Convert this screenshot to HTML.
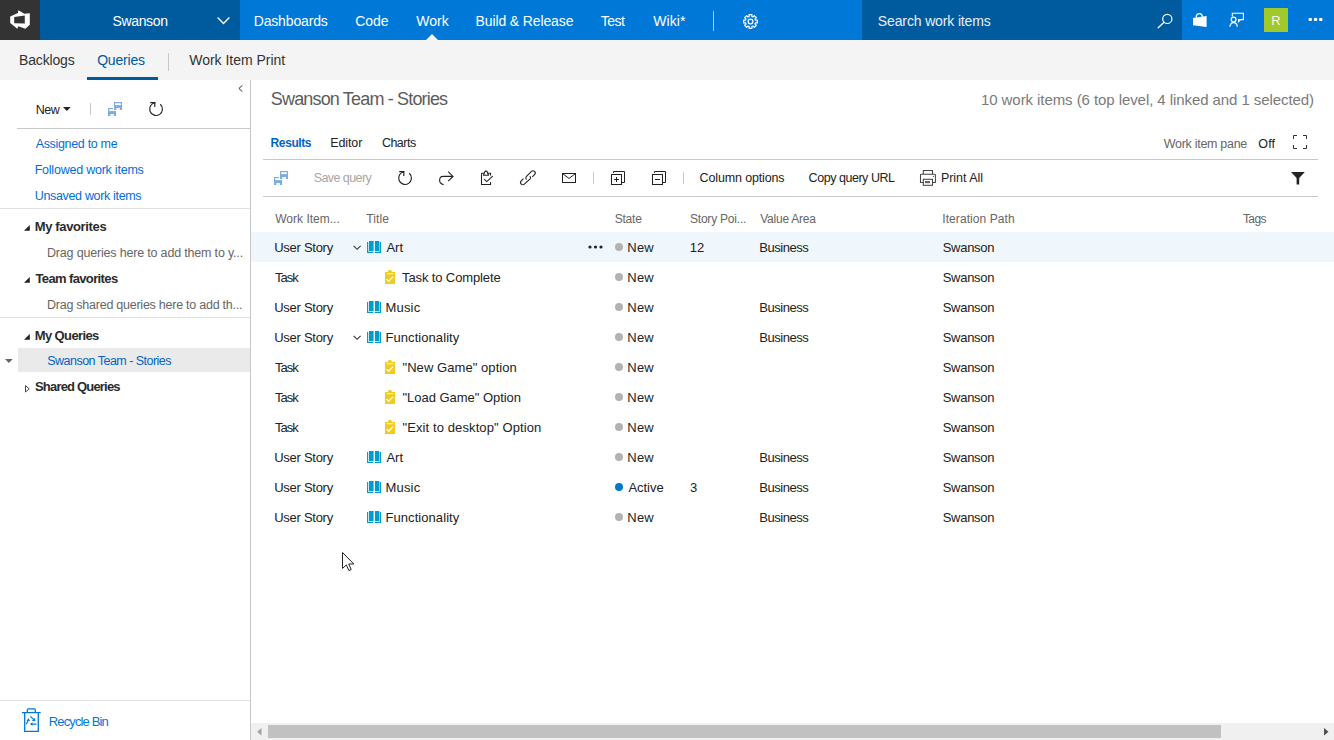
<!DOCTYPE html>
<html><head><meta charset="utf-8"><style>
*{margin:0;padding:0;box-sizing:border-box}
html,body{width:1334px;height:740px;overflow:hidden;background:#fff;font-family:"Liberation Sans",sans-serif;color:#333}
.a{position:absolute;white-space:nowrap}
svg{position:absolute;overflow:visible}
.tn{position:absolute;top:0;line-height:42px;font-size:14px;color:#fff;letter-spacing:-0.2px;white-space:nowrap}
.sn{position:absolute;top:40px;line-height:40px;font-size:14px;color:#333;letter-spacing:-0.1px;white-space:nowrap}
.lk{position:absolute;font-size:12.5px;color:#106ebe;line-height:20px;letter-spacing:-0.15px;white-space:nowrap}
.hd{position:absolute;font-size:13px;font-weight:bold;color:#222;line-height:20px;letter-spacing:-0.3px;white-space:nowrap}
.dg{position:absolute;font-size:12.5px;color:#666;line-height:20px;letter-spacing:-0.15px;white-space:nowrap}
.hr{position:absolute;height:1px;background:#e1e1e1}
.gh{position:absolute;top:209px;font-size:12.5px;color:#666;line-height:20px;letter-spacing:-0.2px;white-space:nowrap}
.c{position:absolute;font-size:13px;color:#222;line-height:30px;letter-spacing:-0.3px;white-space:nowrap}
.dot{position:absolute;width:8px;height:8px;border-radius:50%;background:#b2b2b2}
.tb{position:absolute;top:168px;line-height:20px;font-size:13px;color:#333;letter-spacing:-0.25px;white-space:nowrap}
</style></head><body>
<svg width="0" height="0" style="position:absolute"><defs>
<g id="book"><rect x="0" y="1" width="1.2" height="11" fill="#009ccc"/><rect x="0" y="10.8" width="6.3" height="1.2" fill="#009ccc"/><rect x="12.8" y="1" width="1.2" height="11" fill="#009ccc"/><rect x="7.7" y="10.8" width="6.3" height="1.2" fill="#009ccc"/><rect x="2" y="0" width="4.6" height="10.1" fill="#009ccc"/><rect x="7.9" y="0" width="4.4" height="10.1" fill="#009ccc"/></g>
<g id="task"><rect x="0" y="2" width="10" height="12" fill="#f2cb1d"/><path d="M3 2 L3.3 0.6 Q3.5 0 4.2 0 L5.6 0 Q6.3 0 6.5 0.6 L6.8 2Z" fill="#f2cb1d"/><rect x="1.5" y="3.3" width="7" height="0.9" fill="#fff"/><path d="M1.6 9.1 L3.6 11.2 L8.1 6.6" fill="none" stroke="#fff" stroke-width="1.3"/></g>
<g id="disk"><rect x="0" y="0" width="8" height="8" fill="#7eabe0"/><rect x="1.2" y="1.2" width="5.6" height="1.9" fill="#fff"/><rect x="2.3" y="6" width="3.6" height="2" fill="#fff"/><rect x="3.6" y="6.6" width="1" height="0.9" fill="#a9c6ea"/></g>
<g id="saveall"><use href="#disk" x="0" y="6"/><rect x="5" y="5" width="4" height="4" fill="#fff"/><use href="#disk" x="6" y="0"/></g>
<g id="refresh"><path d="M6.3 0.7 A6.4 6.4 0 1 0 11.3 2.3" fill="none" stroke="#222" stroke-width="1.15"/><path d="M1.2 0.6 L5.8 0.6 L5.8 5" fill="none" stroke="#222" stroke-width="1.15"/></g>
</defs></svg>
<div class="a" style="left:0px;top:0px;width:1334px;height:40px;background:#0078d7;"></div>
<div class="a" style="left:0px;top:0px;width:40px;height:40px;background:#333;"></div>
<div class="a" style="left:40px;top:0px;width:200px;height:40px;background:#005a9e;"></div>
<div class="a" style="left:862px;top:0px;width:320px;height:40px;background:#005a9e;"></div>
<div class="a" style="left:112.47px;top:11px;font-size:14px;line-height:20px;letter-spacing:-0.345px;color:#fff;">Swanson</div>
<div class="a" style="left:253.68px;top:11px;font-size:14px;line-height:20px;letter-spacing:-0.150px;color:#fff;">Dashboards</div>
<div class="a" style="left:355.30px;top:11px;font-size:14px;line-height:20px;letter-spacing:-0.077px;color:#fff;">Code</div>
<div class="a" style="left:416.23px;top:11px;font-size:14px;line-height:20px;letter-spacing:0.020px;color:#fff;">Work</div>
<div class="a" style="left:475.58px;top:11px;font-size:14px;line-height:20px;letter-spacing:-0.126px;color:#fff;">Build &amp; Release</div>
<div class="a" style="left:600.82px;top:11px;font-size:14px;line-height:20px;letter-spacing:-0.557px;color:#fff;">Test</div>
<div class="a" style="left:653.23px;top:11px;font-size:14px;line-height:20px;letter-spacing:0.065px;color:#fff;">Wiki*</div>
<div class="a" style="left:877.87px;top:11px;font-size:14px;line-height:20px;letter-spacing:-0.139px;color:#e8eef5;">Search work items</div>
<svg style="left:10px;top:10px" width="21" height="19" viewBox="0 0 21 19"><path d="M8.3 0.2 L14.5 3.7 L19.8 3.3 L19.8 14.8 L15.4 18.8 L8.3 16.3 L7.3 18.8 L0.2 12.9 L0.2 6.4 L7.9 3 Z M4.2 7 L14.8 5.6 L14.8 13.6 L4.2 13.2 Z" fill="#fff" fill-rule="evenodd"/></svg>
<svg style="left:217px;top:17px" width="13" height="8" viewBox="0 0 13 8"><path d="M0.6 0.6 L6.5 6.5 L12.4 0.6" fill="none" stroke="#fff" stroke-width="1.4"/></svg>
<div class="a" style="left:713px;top:11px;width:1px;height:20px;background:#a8cdef;"></div>
<svg style="left:426px;top:34px" width="12" height="6" viewBox="0 0 12 6"><path d="M0 6 L6 0 L12 6Z" fill="#f4f4f4"/></svg>
<svg style="left:743px;top:14px" width="15" height="15" viewBox="-7.5 -7.5 15 15"><path d="M5.02 -1.35 L6.85 -1.46 L6.85 1.46 L5.02 1.35 L4.50 2.60 L5.87 3.81 L3.81 5.87 L2.60 4.50 L1.35 5.02 L1.46 6.85 L-1.46 6.85 L-1.35 5.02 L-2.60 4.50 L-3.81 5.87 L-5.87 3.81 L-4.50 2.60 L-5.02 1.35 L-6.85 1.46 L-6.85 -1.46 L-5.02 -1.35 L-4.50 -2.60 L-5.87 -3.81 L-3.81 -5.87 L-2.60 -4.50 L-1.35 -5.02 L-1.46 -6.85 L1.46 -6.85 L1.35 -5.02 L2.60 -4.50 L3.81 -5.87 L5.87 -3.81 L4.50 -2.60Z" fill="none" stroke="#fff" stroke-width="1.2" stroke-linejoin="round"/><circle cx="0" cy="0" r="2.4" fill="none" stroke="#fff" stroke-width="1.2"/></svg>
<svg style="left:1157px;top:13px" width="17" height="16" viewBox="0 0 17 16"><circle cx="10.3" cy="5.9" r="4.6" fill="none" stroke="#fff" stroke-width="1.2"/><path d="M7 9.2 L1.2 14.8" stroke="#fff" stroke-width="1.3" stroke-linecap="round"/></svg>
<svg style="left:1193px;top:13px" width="14" height="14" viewBox="0 0 14 14"><path d="M0 5 L13.6 3 L13.6 14 L0 12.2 Z" fill="#fff"/><path d="M3.2 4.8 Q3.2 0.6 6.3 0.6 Q9.3 0.6 9.3 4" fill="none" stroke="#fff" stroke-width="1.3"/></svg>
<svg style="left:1229px;top:12px" width="16" height="16" viewBox="0 0 16 16"><path d="M3.3 4.5 L3.3 1.3 L14.4 1.3 L14.4 7.6 L9.6 7.6" fill="none" stroke="#fff" stroke-width="1.1"/><path d="M9 7.1 L12.6 7.1 L8.9 11.2Z" fill="#fff"/><circle cx="4.6" cy="7.6" r="2.4" fill="none" stroke="#fff" stroke-width="1.2"/><path d="M0.9 14.8 Q1.3 10.6 4.6 10.6 Q7.9 10.6 8.3 14.8" fill="none" stroke="#fff" stroke-width="1.2"/></svg>
<div class="a" style="left:1264px;top:8px;width:24px;height:24px;background:#a1c92b;color:#f4f8e6;font-size:13px;line-height:25px;text-align:center">R</div>
<svg style="left:1308px;top:17px" width="16" height="5" viewBox="0 0 16 5"><rect x="0.6" y="0.9" width="3.3" height="3.1" rx="0.8" fill="#fff"/><rect x="5.9" y="0.9" width="3.3" height="3.1" rx="0.8" fill="#fff"/><rect x="11.1" y="0.9" width="3.3" height="3.1" rx="0.8" fill="#fff"/></svg>
<div class="a" style="left:0px;top:40px;width:1334px;height:40px;background:#f4f4f4;"></div>
<div class="a" style="left:19.08px;top:50px;font-size:14px;line-height:20px;letter-spacing:-0.176px;color:#333;">Backlogs</div>
<div class="a" style="left:97.17px;top:50px;font-size:14px;line-height:20px;letter-spacing:-0.180px;color:#005a9e;">Queries</div>
<div class="a" style="left:87px;top:77px;width:71px;height:3px;background:#005a9e;"></div>
<div class="a" style="left:168px;top:53px;width:1px;height:18px;background:#c8c8c8;"></div>
<div class="a" style="left:189.23px;top:50px;font-size:14px;line-height:20px;letter-spacing:-0.017px;color:#333;">Work Item Print</div>
<div class="a" style="left:250px;top:80px;width:1px;height:660px;background:#c8c8c8;"></div>
<svg style="left:238px;top:85px" width="5" height="7" viewBox="0 0 5 7"><path d="M4.3 0.4 L0.9 3.5 L4.3 6.6" fill="none" stroke="#333" stroke-width="1"/></svg>
<div class="a" style="left:35.80px;top:100px;font-size:12.5px;line-height:20px;letter-spacing:-0.481px;color:#222;">New</div>
<svg style="left:63px;top:107px" width="8" height="4" viewBox="0 0 8 4"><path d="M0 0 L7.7 0 L3.85 4Z" fill="#222"/></svg>
<div class="a" style="left:90px;top:103px;width:1px;height:12px;background:#c8c8c8;"></div>
<svg style="left:108px;top:102px" width="14" height="14" viewBox="0 0 14 14"><use href="#saveall"/></svg>
<svg style="left:149px;top:102px" width="14" height="14" viewBox="0 0 14 14"><use href="#refresh"/></svg>
<div class="a" style="left:17px;top:128px;width:233px;height:1px;background:#c8c8c8;"></div>
<div class="a" style="left:35.70px;top:134px;font-size:12.5px;line-height:20px;letter-spacing:-0.328px;color:#0070d4;">Assigned to me</div>
<div class="a" style="left:34.70px;top:160px;font-size:12.5px;line-height:20px;letter-spacing:-0.228px;color:#0070d4;">Followed work items</div>
<div class="a" style="left:34.76px;top:186px;font-size:12.5px;line-height:20px;letter-spacing:-0.335px;color:#0070d4;">Unsaved work items</div>
<div class="a" style="left:0px;top:208px;width:250px;height:1px;background:#e1e1e1;"></div>
<svg style="left:24px;top:225px" width="6" height="6" viewBox="0 0 6 6"><path d="M5.8 0 L5.8 5.7 L0 5.7Z" fill="#222"/></svg>
<div class="a" style="left:34.76px;top:217px;font-size:13px;line-height:20px;letter-spacing:-0.363px;color:#2b2b2b;font-weight:bold;">My favorites</div>
<div class="a" style="left:47.00px;top:243px;font-size:12.5px;line-height:20px;letter-spacing:-0.181px;color:#666;">Drag queries here to add them to y...</div>
<svg style="left:24px;top:277px" width="6" height="6" viewBox="0 0 6 6"><path d="M5.8 0 L5.8 5.7 L0 5.7Z" fill="#222"/></svg>
<div class="a" style="left:35.47px;top:269px;font-size:13px;line-height:20px;letter-spacing:-0.627px;color:#2b2b2b;font-weight:bold;">Team favorites</div>
<div class="a" style="left:47.00px;top:295px;font-size:12.5px;line-height:20px;letter-spacing:-0.245px;color:#666;">Drag shared queries here to add th...</div>
<div class="a" style="left:0px;top:317px;width:250px;height:1px;background:#e1e1e1;"></div>
<svg style="left:24px;top:334px" width="6" height="6" viewBox="0 0 6 6"><path d="M5.8 0 L5.8 5.7 L0 5.7Z" fill="#222"/></svg>
<div class="a" style="left:34.76px;top:326px;font-size:13px;line-height:20px;letter-spacing:-0.612px;color:#2b2b2b;font-weight:bold;">My Queries</div>
<div class="a" style="left:18px;top:348px;width:232px;height:24px;background:#eaeaea;"></div>
<svg style="left:5px;top:359px" width="8" height="4" viewBox="0 0 8 4"><path d="M0 0 L7.7 0 L3.85 4Z" fill="#666"/></svg>
<div class="a" style="left:47.24px;top:351px;font-size:12.5px;line-height:20px;letter-spacing:-0.521px;color:#0364c4;">Swanson Team - Stories</div>
<svg style="left:25px;top:385px" width="5" height="8" viewBox="0 0 5 8"><path d="M0.5 0.6 L4.2 3.8 L0.5 7Z" fill="none" stroke="#333" stroke-width="0.9"/></svg>
<div class="a" style="left:35.01px;top:377px;font-size:13px;line-height:20px;letter-spacing:-0.812px;color:#2b2b2b;font-weight:bold;">Shared Queries</div>
<div class="a" style="left:0px;top:700px;width:250px;height:1px;background:#e1e1e1;"></div>
<svg style="left:18px;top:704px" width="26" height="30" viewBox="0 0 26 30"><path d="M3.9 8.6 L22.7 8.6 M9.3 8.4 L9.3 6.1 Q9.3 4.9 10.5 4.9 L16.2 4.9 Q17.4 4.9 17.4 6.1 L17.4 8.4 M6.7 8.8 L6.7 27.4 L20.3 27.4 L20.3 8.8" fill="none" stroke="#0078d7" stroke-width="1.3"/><path d="M12.4 12.3 L16.3 16.2 M8.3 20.2 L10.3 16.1 M18.6 20.1 L13.2 20.1" fill="none" stroke="#0078d7" stroke-width="1.2"/><path d="M13.9 16.9 L17.3 17.2 L17 13.8Z M8.6 16.7 L10.6 14.2 L12 17.1Z M14.4 18.2 L12 20.1 L14.4 22Z" fill="#0078d7"/></svg>
<div class="a" style="left:48.86px;top:712px;font-size:13px;line-height:20px;letter-spacing:-0.875px;color:#0078d7;">Recycle Bin</div>
<div class="a" style="left:270.79px;top:87px;font-size:18px;line-height:24px;letter-spacing:-0.830px;color:#5c5c5c;">Swanson Team - Stories</div>
<div class="a" style="left:980.98px;top:89px;font-size:15px;line-height:22px;letter-spacing:-0.073px;color:#7a7a7a;">10 work items (6 top level, 4 linked and 1 selected)</div>
<div class="a" style="left:270.62px;top:133px;font-size:12px;line-height:20px;letter-spacing:-0.410px;color:#0364c4;font-weight:bold;">Results</div>
<div class="a" style="left:330.30px;top:133px;font-size:12.5px;line-height:20px;letter-spacing:-0.127px;color:#222;">Editor</div>
<div class="a" style="left:381.88px;top:133px;font-size:12.5px;line-height:20px;letter-spacing:-0.510px;color:#222;">Charts</div>
<div class="a" style="left:1163.84px;top:134px;font-size:12.5px;line-height:20px;letter-spacing:-0.299px;color:#666;">Work item pane</div>
<div class="a" style="left:1258.34px;top:134px;font-size:12.5px;line-height:20px;letter-spacing:0.081px;color:#222;">Off</div>
<svg style="left:1293px;top:135px" width="14" height="14" viewBox="0 0 14 14"><path d="M0.5 4 L0.5 0.5 L4 0.5 M10 0.5 L13.5 0.5 L13.5 4 M13.5 10 L13.5 13.5 L10 13.5 M4 13.5 L0.5 13.5 L0.5 10" fill="none" stroke="#333" stroke-width="1"/></svg>
<div class="a" style="left:263px;top:159px;width:1055px;height:1px;background:#c8c8c8;"></div>
<div class="a" style="left:263px;top:196px;width:1055px;height:1px;background:#c8c8c8;"></div>
<svg style="left:274px;top:171px" width="14" height="14" viewBox="0 0 14 14"><use href="#saveall"/></svg>
<div class="a" style="left:313.74px;top:168px;font-size:12.5px;line-height:20px;letter-spacing:-0.576px;color:#a6a6a6;">Save query</div>
<svg style="left:398px;top:171px" width="14" height="14" viewBox="0 0 14 14"><use href="#refresh"/></svg>
<svg style="left:439px;top:171px" width="15" height="14" viewBox="0 0 15 14"><path d="M3.6 5.4 L14 5.4 M9.2 0.6 L14 5.4 L9.2 10.2 M4 5.4 Q0.6 5.4 0.6 9.3 Q0.6 12.8 4.6 13.6" fill="none" stroke="#222" stroke-width="1.1"/></svg>
<svg style="left:478px;top:168px" width="20" height="20" viewBox="0 0 20 20"><path d="M3.5 5.3 L3.5 16.5 L12.5 16.5 L12.5 14 M12.5 7.6 L12.5 5.3 L9.6 5.3 M6.2 5.3 L3.5 5.3" fill="none" stroke="#222" stroke-width="1.05"/><path d="M5.4 7.3 L10.6 7.3 L9.7 5.2 L9.3 4 Q9 3.1 8 3.1 Q7 3.1 6.7 4 L6.3 5.2 Z" fill="none" stroke="#222" stroke-width="1.05" stroke-linejoin="round"/><path d="M6.1 11.2 L8.8 13.6 L14.7 8.2" fill="none" stroke="#222" stroke-width="1.1"/></svg>
<svg style="left:518px;top:168px" width="20" height="20" viewBox="0 0 20 20"><path d="M5.5 10.68 L3.24 12.94 A2.2 2.2 0 0 0 6.36 16.06 L11.86 11.16 A2.2 2.2 0 0 0 11.86 8.04" fill="none" stroke="#222" stroke-width="1.1"/><path d="M8.5 11.5 A2.2 2.2 0 0 1 8.5 8.38 L13.44 3.44 A2.2 2.2 0 0 1 16.56 6.56 L14.3 8.8" fill="none" stroke="#222" stroke-width="1.1"/></svg>
<svg style="left:560px;top:170px" width="20" height="16" viewBox="0 0 20 16"><rect x="2.5" y="3.5" width="13" height="9" fill="none" stroke="#222" stroke-width="1"/><path d="M3 4 L9 8.4 L15 4" fill="none" stroke="#222" stroke-width="1"/></svg>
<div class="a" style="left:593px;top:172px;width:1px;height:12px;background:#c8c8c8;"></div>
<svg style="left:610px;top:170px" width="16" height="16" viewBox="0 0 16 16"><path d="M3.5 3 L3.5 1.5 L14.5 1.5 L14.5 12.5 L11.5 12.5" fill="none" stroke="#222" stroke-width="1"/><rect x="1.5" y="4.5" width="10" height="10" fill="none" stroke="#222" stroke-width="1"/><path d="M4 9.5 L9 9.5 M6.5 7 L6.5 12" stroke="#222" stroke-width="1"/></svg>
<svg style="left:651px;top:170px" width="16" height="16" viewBox="0 0 16 16"><path d="M3.5 3 L3.5 1.5 L14.5 1.5 L14.5 12.5 L11.5 12.5" fill="none" stroke="#222" stroke-width="1"/><rect x="1.5" y="4.5" width="10" height="10" fill="none" stroke="#222" stroke-width="1"/><path d="M4 9.5 L9 9.5" stroke="#222" stroke-width="1"/></svg>
<div class="a" style="left:683px;top:172px;width:1px;height:12px;background:#c8c8c8;"></div>
<div class="a" style="left:699.58px;top:168px;font-size:12.5px;line-height:20px;letter-spacing:-0.139px;color:#222;">Column options</div>
<div class="a" style="left:808.58px;top:168px;font-size:12.5px;line-height:20px;letter-spacing:-0.460px;color:#222;">Copy query URL</div>
<svg style="left:920px;top:170px" width="16" height="16" viewBox="0 0 16 16"><path d="M3.3 4.2 L3.3 0.5 L12.5 0.5 L12.5 4.2 M3.3 12.4 L0.5 12.4 L0.5 5 Q0.5 4.2 1.3 4.2 L14.6 4.2 Q15.4 4.2 15.4 5 L15.4 12.4 L12.5 12.4" fill="none" stroke="#444" stroke-width="1.05"/><rect x="3.3" y="9.3" width="9.2" height="6" fill="#fff" stroke="#444" stroke-width="1.05"/><rect x="5" y="11" width="5" height="2.2" fill="#666"/><circle cx="13.4" cy="6.4" r="0.55" fill="#444"/></svg>
<div class="a" style="left:940.90px;top:168px;font-size:12.5px;line-height:20px;letter-spacing:-0.020px;color:#222;">Print All</div>
<svg style="left:1291px;top:172px" width="14" height="13" viewBox="0 0 14 13"><path d="M0 0 L13.8 0 L8.2 6 L8.2 12.6 L5.6 12.6 L5.6 6 Z" fill="#222"/></svg>
<div class="a" style="left:275.24px;top:209px;font-size:12px;line-height:20px;letter-spacing:0.009px;color:#666;">Work Item...</div>
<div class="a" style="left:366.26px;top:209px;font-size:12px;line-height:20px;letter-spacing:0.120px;color:#666;">Title</div>
<div class="a" style="left:614.66px;top:209px;font-size:12px;line-height:20px;letter-spacing:-0.185px;color:#666;">State</div>
<div class="a" style="left:689.96px;top:209px;font-size:12px;line-height:20px;letter-spacing:-0.205px;color:#666;">Story Poi...</div>
<div class="a" style="left:760.24px;top:209px;font-size:12px;line-height:20px;letter-spacing:-0.236px;color:#666;">Value Area</div>
<div class="a" style="left:942.22px;top:209px;font-size:12px;line-height:20px;letter-spacing:0.086px;color:#666;">Iteration Path</div>
<div class="a" style="left:1242.96px;top:209px;font-size:12px;line-height:20px;letter-spacing:-0.620px;color:#666;">Tags</div>
<div class="a" style="left:251px;top:232px;width:1083px;height:30px;background:#eff6fc;"></div>
<div class="a" style="left:274.22px;top:233px;font-size:13px;line-height:30px;letter-spacing:-0.272px;color:#222;">User Story</div>
<svg style="left:353px;top:245px" width="9" height="6" viewBox="0 0 9 6"><path d="M0.6 0.8 L4.1 4.3 L7.6 0.8" fill="none" stroke="#333" stroke-width="1.1"/></svg>
<svg style="left:367px;top:241px" width="14" height="12" viewBox="0 0 14 12"><use href="#book"/></svg>
<div class="a" style="left:386.40px;top:233px;font-size:13px;line-height:30px;letter-spacing:0.045px;color:#222;">Art</div>
<svg style="left:588px;top:245px" width="15" height="4" viewBox="0 0 15 4"><circle cx="2" cy="2" r="1.6" fill="#222"/><circle cx="7.5" cy="2" r="1.6" fill="#222"/><circle cx="13" cy="2" r="1.6" fill="#222"/></svg>
<div class="dot" style="left:615px;top:243px;background:#b2b2b2"></div>
<div class="a" style="left:627.36px;top:233px;font-size:13px;line-height:30px;letter-spacing:0.187px;color:#222;">New</div>
<div class="a" style="left:689.82px;top:233px;font-size:13px;line-height:30px;letter-spacing:-0.105px;color:#222;">12</div>
<div class="a" style="left:759.26px;top:233px;font-size:13px;line-height:30px;letter-spacing:-0.469px;color:#222;">Business</div>
<div class="a" style="left:942.71px;top:233px;font-size:13px;line-height:30px;letter-spacing:-0.277px;color:#222;">Swanson</div>
<div class="a" style="left:275.04px;top:263px;font-size:13px;line-height:30px;letter-spacing:-1.018px;color:#222;">Task</div>
<svg style="left:385px;top:270px" width="11" height="14" viewBox="0 0 11 14"><use href="#task"/></svg>
<div class="a" style="left:402.04px;top:263px;font-size:13px;line-height:30px;letter-spacing:-0.119px;color:#222;">Task to Complete</div>
<div class="dot" style="left:615px;top:273px;background:#b2b2b2"></div>
<div class="a" style="left:627.36px;top:263px;font-size:13px;line-height:30px;letter-spacing:0.187px;color:#222;">New</div>
<div class="a" style="left:942.71px;top:263px;font-size:13px;line-height:30px;letter-spacing:-0.277px;color:#222;">Swanson</div>
<div class="a" style="left:274.22px;top:293px;font-size:13px;line-height:30px;letter-spacing:-0.272px;color:#222;">User Story</div>
<svg style="left:367px;top:301px" width="14" height="12" viewBox="0 0 14 12"><use href="#book"/></svg>
<div class="a" style="left:385.46px;top:293px;font-size:13px;line-height:30px;letter-spacing:0.184px;color:#222;">Music</div>
<div class="dot" style="left:615px;top:303px;background:#b2b2b2"></div>
<div class="a" style="left:627.36px;top:293px;font-size:13px;line-height:30px;letter-spacing:0.187px;color:#222;">New</div>
<div class="a" style="left:759.26px;top:293px;font-size:13px;line-height:30px;letter-spacing:-0.469px;color:#222;">Business</div>
<div class="a" style="left:942.71px;top:293px;font-size:13px;line-height:30px;letter-spacing:-0.277px;color:#222;">Swanson</div>
<div class="a" style="left:274.22px;top:323px;font-size:13px;line-height:30px;letter-spacing:-0.272px;color:#222;">User Story</div>
<svg style="left:353px;top:335px" width="9" height="6" viewBox="0 0 9 6"><path d="M0.6 0.8 L4.1 4.3 L7.6 0.8" fill="none" stroke="#333" stroke-width="1.1"/></svg>
<svg style="left:367px;top:331px" width="14" height="12" viewBox="0 0 14 12"><use href="#book"/></svg>
<div class="a" style="left:385.46px;top:323px;font-size:13px;line-height:30px;letter-spacing:0.070px;color:#222;">Functionality</div>
<div class="dot" style="left:615px;top:333px;background:#b2b2b2"></div>
<div class="a" style="left:627.36px;top:323px;font-size:13px;line-height:30px;letter-spacing:0.187px;color:#222;">New</div>
<div class="a" style="left:759.26px;top:323px;font-size:13px;line-height:30px;letter-spacing:-0.469px;color:#222;">Business</div>
<div class="a" style="left:942.71px;top:323px;font-size:13px;line-height:30px;letter-spacing:-0.277px;color:#222;">Swanson</div>
<div class="a" style="left:275.04px;top:353px;font-size:13px;line-height:30px;letter-spacing:-1.018px;color:#222;">Task</div>
<svg style="left:385px;top:360px" width="11" height="14" viewBox="0 0 11 14"><use href="#task"/></svg>
<div class="a" style="left:402.48px;top:353px;font-size:13px;line-height:30px;letter-spacing:0.067px;color:#222;">"New Game" option</div>
<div class="dot" style="left:615px;top:363px;background:#b2b2b2"></div>
<div class="a" style="left:627.36px;top:353px;font-size:13px;line-height:30px;letter-spacing:0.187px;color:#222;">New</div>
<div class="a" style="left:942.71px;top:353px;font-size:13px;line-height:30px;letter-spacing:-0.277px;color:#222;">Swanson</div>
<div class="a" style="left:275.04px;top:383px;font-size:13px;line-height:30px;letter-spacing:-1.018px;color:#222;">Task</div>
<svg style="left:385px;top:390px" width="11" height="14" viewBox="0 0 11 14"><use href="#task"/></svg>
<div class="a" style="left:402.48px;top:383px;font-size:13px;line-height:30px;letter-spacing:-0.030px;color:#222;">"Load Game" Option</div>
<div class="dot" style="left:615px;top:393px;background:#b2b2b2"></div>
<div class="a" style="left:627.36px;top:383px;font-size:13px;line-height:30px;letter-spacing:0.187px;color:#222;">New</div>
<div class="a" style="left:942.71px;top:383px;font-size:13px;line-height:30px;letter-spacing:-0.277px;color:#222;">Swanson</div>
<div class="a" style="left:275.04px;top:413px;font-size:13px;line-height:30px;letter-spacing:-1.018px;color:#222;">Task</div>
<svg style="left:385px;top:420px" width="11" height="14" viewBox="0 0 11 14"><use href="#task"/></svg>
<div class="a" style="left:402.48px;top:413px;font-size:13px;line-height:30px;letter-spacing:0.104px;color:#222;">"Exit to desktop" Option</div>
<div class="dot" style="left:615px;top:423px;background:#b2b2b2"></div>
<div class="a" style="left:627.36px;top:413px;font-size:13px;line-height:30px;letter-spacing:0.187px;color:#222;">New</div>
<div class="a" style="left:942.71px;top:413px;font-size:13px;line-height:30px;letter-spacing:-0.277px;color:#222;">Swanson</div>
<div class="a" style="left:274.22px;top:443px;font-size:13px;line-height:30px;letter-spacing:-0.272px;color:#222;">User Story</div>
<svg style="left:367px;top:451px" width="14" height="12" viewBox="0 0 14 12"><use href="#book"/></svg>
<div class="a" style="left:386.40px;top:443px;font-size:13px;line-height:30px;letter-spacing:0.045px;color:#222;">Art</div>
<div class="dot" style="left:615px;top:453px;background:#b2b2b2"></div>
<div class="a" style="left:627.36px;top:443px;font-size:13px;line-height:30px;letter-spacing:0.187px;color:#222;">New</div>
<div class="a" style="left:759.26px;top:443px;font-size:13px;line-height:30px;letter-spacing:-0.469px;color:#222;">Business</div>
<div class="a" style="left:942.71px;top:443px;font-size:13px;line-height:30px;letter-spacing:-0.277px;color:#222;">Swanson</div>
<div class="a" style="left:274.22px;top:473px;font-size:13px;line-height:30px;letter-spacing:-0.272px;color:#222;">User Story</div>
<svg style="left:367px;top:481px" width="14" height="12" viewBox="0 0 14 12"><use href="#book"/></svg>
<div class="a" style="left:385.46px;top:473px;font-size:13px;line-height:30px;letter-spacing:0.184px;color:#222;">Music</div>
<div class="dot" style="left:615px;top:483px;background:#007acc"></div>
<div class="a" style="left:628.40px;top:473px;font-size:13px;line-height:30px;letter-spacing:-0.035px;color:#222;">Active</div>
<div class="a" style="left:690.08px;top:473px;font-size:13px;line-height:30px;letter-spacing:0.625px;color:#222;">3</div>
<div class="a" style="left:759.26px;top:473px;font-size:13px;line-height:30px;letter-spacing:-0.469px;color:#222;">Business</div>
<div class="a" style="left:942.71px;top:473px;font-size:13px;line-height:30px;letter-spacing:-0.277px;color:#222;">Swanson</div>
<div class="a" style="left:274.22px;top:503px;font-size:13px;line-height:30px;letter-spacing:-0.272px;color:#222;">User Story</div>
<svg style="left:367px;top:511px" width="14" height="12" viewBox="0 0 14 12"><use href="#book"/></svg>
<div class="a" style="left:385.46px;top:503px;font-size:13px;line-height:30px;letter-spacing:0.070px;color:#222;">Functionality</div>
<div class="dot" style="left:615px;top:513px;background:#b2b2b2"></div>
<div class="a" style="left:627.36px;top:503px;font-size:13px;line-height:30px;letter-spacing:0.187px;color:#222;">New</div>
<div class="a" style="left:759.26px;top:503px;font-size:13px;line-height:30px;letter-spacing:-0.469px;color:#222;">Business</div>
<div class="a" style="left:942.71px;top:503px;font-size:13px;line-height:30px;letter-spacing:-0.277px;color:#222;">Swanson</div>
<div class="a" style="left:251px;top:723px;width:1083px;height:17px;background:#f0f0f0;"></div>
<div class="a" style="left:268px;top:725px;width:953px;height:13px;background:#c1c1c1;"></div>
<svg style="left:257px;top:728px" width="5" height="8" viewBox="0 0 5 8"><path d="M4.5 0 L4.5 7.5 L0 3.75Z" fill="#a3a3a3"/></svg>
<svg style="left:1324px;top:728px" width="5" height="8" viewBox="0 0 5 8"><path d="M0 0 L0 7.5 L4.5 3.75Z" fill="#505050"/></svg>
<svg style="left:342px;top:552px" width="13" height="19" viewBox="0 0 13 19"><path d="M0.5 0.5 L0.5 16.5 L4.3 12.9 L6.9 18.5 L9.2 17.5 L6.7 12 L11.8 12 Z" fill="#fff" stroke="#222" stroke-width="1" stroke-linejoin="round"/></svg>
</body></html>
